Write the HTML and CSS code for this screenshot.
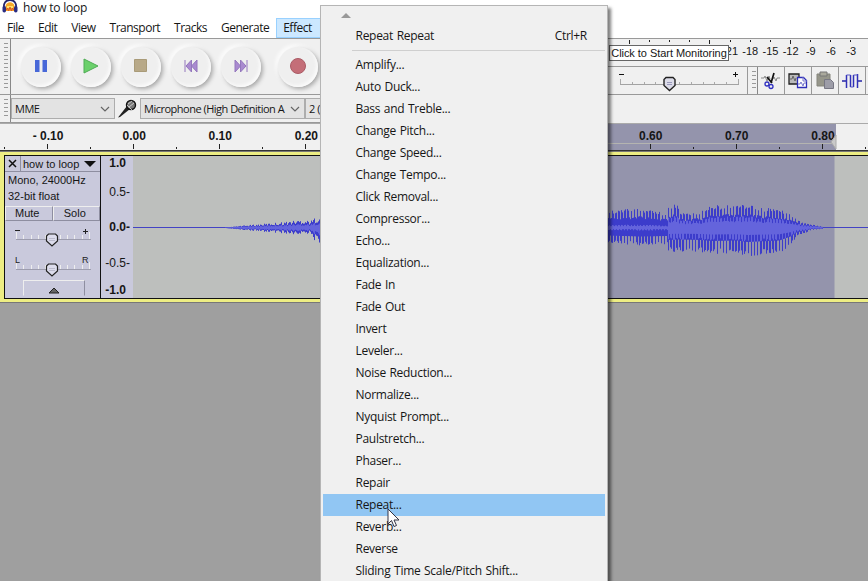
FILE: index.html
```html
<!DOCTYPE html>
<html lang="en">
<head>
  <meta charset="UTF-8" />
  <title>how to loop</title>
  <link rel="stylesheet" href="styles.css">
</head>
<body>

<div class="titlebar">
  <svg class="logo" width="16" height="14" viewBox="0 0 16 14">
    <path d="M2 9C1 3 4 0 8 0s7 3 6 9" fill="none" stroke="#23246b" stroke-width="1.800"/>
    <path d="M3.500 11V6c1-5 8-5 9 0v5z" fill="#f7a929"/>
    <path d="M5 6h6v2H5z" fill="#ffe36a"/>
    <rect x="0.500" y="6" width="3.500" height="6.500" rx="1.700" fill="#2b2d82"/>
    <rect x="12" y="6" width="3.500" height="6.500" rx="1.700" fill="#2b2d82"/>
    <path d="M4 10l1.500-2 1 3 1.500-4 1.500 4 1-3 1.500 2" fill="none" stroke="#d9542b"/>
  </svg>
  <span>how to loop</span>
</div>

<div class="menubar">
  <span>File</span><span>Edit</span><span>View</span><span>Transport</span><span>Tracks</span><span>Generate</span><span class="open">Effect</span>
</div>

<div class="toolbars">
  <div class="left">
    <div class="transport">
      <i class="grip"></i>
      <button><svg width="14" height="14"><path d="M1 1h4.500v12H1zM8.500 1H13v12H8.500z" fill="#4868d8"/></svg></button>
      <button><svg width="16" height="16"><path d="M1 1l14 7-14 7z" fill="#6bd06b" stroke="#4fac55"/></svg></button>
      <button><svg width="14" height="14"><path d="M.5.5h12v12H.5z" fill="#b8a988" stroke="#a99b78"/></svg></button>
      <button><svg width="14" height="14"><path d="M1 1v12M7.500 1L2 7l5.500 6zM13 1L7.500 7l5.500 6z" fill="#a98ad0" stroke="#9477bd"/></svg></button>
      <button><svg width="14" height="14"><path d="M13 1v12M1 1l5.500 6L1 13zM6.500 1L12 7l-5.500 6z" fill="#a98ad0" stroke="#9477bd"/></svg></button>
      <button class="record"><svg width="18" height="18"><circle cx="9" cy="9" r="7.500" fill="#c46e78" stroke="#ab5b65"/></svg></button>
    </div>
    <div class="devices">
      <i class="grip"></i>
      <div class="select host">MME<svg width="10" height="6"><path d="M1 1l4 4 4-4"/></svg></div>
      <svg class="mic" width="20" height="20" viewBox="0 0 20 20">
        <path d="M1 18.500L10 7l3 3L3 18z" fill="#222"/>
        <circle cx="14" cy="6" r="4.500" fill="#777" stroke="#111" stroke-width="1.400"/>
        <path d="M11 5l4-3M12 8l5-4M10 6l5 5" stroke="#ddd" stroke-width=".8"/>
      </svg>
      <div class="select input">Microphone (High Definition A<svg width="10" height="6"><path d="M1 1l4 4 4-4"/></svg></div>
      <div class="select channels">2 (Stereo)</div>
    </div>
  </div>
  <div class="right">
    <div class="meter">
      <svg width="260" height="6"><path id="meter-ticks" stroke="#222"/></svg>
      <div class="scale"><span>-21</span><span>-18</span><span>-15</span><span>-12</span><span>-9</span><span>-6</span><span>-3</span><span>0</span></div>
      <div class="tooltip">Click to Start Monitoring</div>
    </div>
    <div class="tools">
      <svg class="slider" width="139" height="26">
        <path d="M11 7.500h5M125 7.500h5M127.500 5v5" stroke="#111"/>
        <path id="volume-ticks" stroke="#aaa"/>
        <path d="M12 17.500h119" stroke="#a3a3a3"/>
        <path d="M58 10.500h7l2 2v6l-5.500 5-5.500-5v-6z" fill="#dcdce8" stroke="#222" stroke-width="1.400"/>
        <path d="M59 15.500h5M59 17.500h5" stroke="#99b"/>
      </svg>
      <i class="grip"></i>
      <button><svg width="20" height="18">
        <path d="M0 6h3l1-2 2 5 2-5 1 3M12 7l1-2 2 4 1-3h3" fill="none" stroke="#888"/>
        <path d="M13 1l-3 10M6 5l5 6" stroke="#111" stroke-width="1.700"/>
        <circle cx="6" cy="12" r="2" fill="none" stroke="#2f2fc0" stroke-width="1.300"/><circle cx="10" cy="14.500" r="2" fill="none" stroke="#2f2fc0" stroke-width="1.300"/>
      </svg></button>
      <button><svg width="20" height="18">
        <path d="M1 2h10v10H1z" fill="#bbb" stroke="#222" stroke-width="1.300"/><path d="M2 7h2l1-3 2 5 1-3" fill="none" stroke="#666"/>
        <path d="M9.500 5.500h6l3 3v7h-9z" fill="#fff" stroke="#2f2fb8" stroke-width="1.300"/><path d="M15 5v4h4M10 12h2l1-2 2 4 1-3h2" fill="none" stroke="#77c"/>
      </svg></button>
      <button><svg width="20" height="19">
        <path d="M2 3h13v12H2z" fill="#96968a" stroke="#85857c"/><path d="M5 1h7v4H5z" fill="#aaa99c" stroke="#777"/>
        <path d="M9.500 8.500h6l3 3v6h-9z" fill="#9d9da8" stroke="#777784"/>
      </svg></button>
      <button><svg width="20" height="18">
        <path d="M0 9h5M15 9h5" stroke="#2626a8" stroke-width="1.300"/><path d="M4.500 3v13M8.500 3v12M11.500 3v12M15.500 2v14" stroke="#3030b8" stroke-width="1.500"/><path d="M4.500 3h4M8.500 15h3M11.500 3h4" stroke="#5858c8"/>
      </svg></button>
    </div>
  </div>
</div>

<div class="ruler">
  <div class="labels"><span>- 0.10</span><span>0.00</span><span>0.10</span><span>0.20</span><span>0.30</span><span>0.40</span><span>0.50</span><span>0.60</span><span>0.70</span><span>0.80</span></div>
  <svg width="868" height="27">
    <path d="M400 19.500h432" stroke="#b4b4b0"/>
    <path id="ruler-ticks" stroke="#222"/>
    <path d="M836 11v14l-5-7z" fill="#c9c9c9" stroke="#aaa"/>
  </svg>
</div>

<div class="track">
  <div class="panel">
    <div class="name"><b><svg width="9" height="9"><path d="M1 1l7 7M8 1L1 8" stroke="#111" stroke-width="1.500"/></svg></b><span>how to loop</span><svg width="12" height="6"><path d="M0 0h12L6 6z" fill="#111"/></svg></div>
    <div class="info">Mono, 24000Hz<br>32-bit float</div>
    <div class="toggles"><span>Mute</span><span>Solo</span></div>
    <svg class="knobs" width="95" height="59">
      <path d="M10 9.500h5M78 10.500h5M80.500 8v5" stroke="#222"/>
      <path class="knob-ticks" stroke="#eee"/>
      <path d="M11 18.500h75M11 48.500h75" stroke="#9d9dae"/>
      <text x="10" y="42">L</text><text x="77" y="42">R</text>
      <g fill="#dcdcec" stroke="#222" stroke-width="1.200">
        <path d="M43.500 13h7l2 2v5l-5.500 5-5.500-5v-5z"/>
        <path d="M43.500 43h7l2 2v5l-5.500 5-5.500-5v-5z"/>
      </g>
      <path d="M44 17.500h6M44 19.500h6M44 47.500h6M44 49.500h6" stroke="#bbc"/>
    </svg>
    <div class="collapse"><svg width="12" height="7"><path d="M1 6l5-5 5 5z" fill="#666" stroke="#222"/></svg></div>
  </div>
  <div class="vscale"><b>1.0</b><span>0.5<i>-</i></span><b>0.0<i>-</i></b><span>-0.5<i>-</i></span><b>-1.0</b></div>
  <svg class="wave" width="737" height="142">
    <path d="M0 0h2v142H0z" fill="#c9c9dc"/>
    <rect x="269" width="434.500" height="142" fill="#9494ac"/>
    <path d="M2 71.500h735" stroke="#4343c4"/>
    <path id="peaks" stroke="#3c3ccb"/>
    <path id="rms" stroke="#6464dc"/>
  </svg>
</div>

<div class="effect-menu">
  <svg class="scroll-up" width="10" height="5"><path d="M0 5l5-5 5 5z" fill="#999"/></svg>
  <div class="item last-effect"><span>Repeat Repeat</span><span>Ctrl+R</span></div>
  <hr>
  <div class="item">Amplify...</div>
  <div class="item">Auto Duck...</div>
  <div class="item">Bass and Treble...</div>
  <div class="item">Change Pitch...</div>
  <div class="item">Change Speed...</div>
  <div class="item">Change Tempo...</div>
  <div class="item">Click Removal...</div>
  <div class="item">Compressor...</div>
  <div class="item">Echo...</div>
  <div class="item">Equalization...</div>
  <div class="item">Fade In</div>
  <div class="item">Fade Out</div>
  <div class="item">Invert</div>
  <div class="item">Leveler...</div>
  <div class="item">Noise Reduction...</div>
  <div class="item">Normalize...</div>
  <div class="item">Nyquist Prompt...</div>
  <div class="item">Paulstretch...</div>
  <div class="item">Phaser...</div>
  <div class="item">Repair</div>
  <div class="item hover">Repeat...</div>
  <div class="item">Reverb...</div>
  <div class="item">Reverse</div>
  <div class="item">Sliding Time Scale/Pitch Shift...</div>
</div>

<svg class="cursor" width="13" height="20"><path d="M1 1v15l3.500-3.500 2.500 6 2.500-1-2.500-5.500h5z" fill="#fff" stroke="#334"/></svg>

<script src="script.js"></script>
</body>
</html>
```

FILE: styles.css
```css
* {
  box-sizing: border-box;
}

body {
  margin: 0;
  width: 868px;
  height: 581px;
  overflow: hidden;
  background: #9f9f9f;
  font-family: "Open Sans", "Noto Sans", sans-serif;
  font-size: 12px;
  color: #161616;
}

svg {
  display: block;
  flex: none;
}

.titlebar {
  display: flex;
  gap: 5px;
  height: 18px;
  padding-left: 2px;
  background: #fff;
  line-height: 15px;
  letter-spacing: -0.2px;
}

.menubar {
  display: flex;
  height: 20px;
  background: #fff;
  line-height: 19px;
  letter-spacing: -0.5px;
}

.menubar span {
  padding: 0 7px;
}

.menubar .open {
  background: #cce8ff;
  border: 1px solid #99d1ff;
  line-height: 17px;
  padding: 0 6px;
  width: 50px;
}

.toolbars {
  display: flex;
  height: 85px;
  background: #f0f0f0;
  border-top: 1px solid #999;
}

.left {
  width: 608px;
}

.right {
  width: 260px;
}

.grip {
  flex: none;
  width: 11px;
  align-self: stretch;
  border-right: 1px solid #888;
  background: repeating-linear-gradient(#999 0 1px, transparent 1px 4px) 4px 4px / 4px calc(100% - 8px) no-repeat;
}

button {
  display: flex;
  align-items: center;
  justify-content: center;
  padding: 0;
  border: 0;
  background: #f0f0f0;
}

.transport {
  display: flex;
  align-items: center;
  gap: 10px;
  height: 56px;
  border-bottom: 1px solid #999;
}

.transport button {
  width: 40px;
  height: 40px;
  padding-bottom: 2px;
  border-radius: 50%;
  background: #efefef;
  box-shadow: 2px 2px 4px #a8a8a8, -2px -2px 4px #fff, inset -2px -2px 3px #fafafa;
}

.transport .record {
  margin-left: 7px;
}

.devices {
  display: flex;
  align-items: center;
  height: 28px;
  border-bottom: 1px solid #999;
}

.select {
  display: flex;
  align-items: center;
  justify-content: space-between;
  height: 21px;
  padding: 0 4px 0 3px;
  border: 1px solid #adadad;
  background: #e3e3e3;
  font-size: 11px;
  white-space: nowrap;
  letter-spacing: -0.5px;
}

.select path {
  fill: none;
  stroke: #666;
  stroke-width: 1.2;
}

.host {
  width: 104px;
}

.mic {
  margin: 0 3px 0 2px;
}

.input {
  width: 165px;
}

.channels {
  width: 80px;
}

.meter {
  position: relative;
  height: 28px;
  overflow: hidden;
  border-bottom: 1px solid #999;
}

.scale {
  display: flex;
  width: 148px;
  margin-left: 112px;
  font: 11px/13px "Liberation Sans", sans-serif;
}

.scale span {
  flex: none;
  width: 20.2px;
  text-align: center;
}

.tooltip {
  position: absolute;
  left: 1px;
  top: 6px;
  width: 120px;
  height: 16px;
  border: 1px solid #666;
  background: #fff;
  font: 11px/15px "Liberation Sans", sans-serif;
  letter-spacing: -0.05px;
  text-align: center;
  white-space: nowrap;
}

.tools {
  display: flex;
  height: 28px;
  border-bottom: 1px solid #999;
}

.tools .grip {
  border-left: 1px solid #999;
}

.tools button {
  flex: none;
  width: 27px;
  border-right: 1px solid #999;
}

.ruler {
  position: relative;
  height: 28px;
  border-top: 1px solid #aaa;
  border-bottom: 1px solid #333;
  background: linear-gradient(90deg, #f0f0f0 400px, #9494ac 400px 836px, #f0f0f0 836px);
}

.labels {
  display: flex;
  padding-left: 5px;
  font: bold 12px/25px "Liberation Sans", sans-serif;
}

.labels span {
  flex: none;
  width: 86.1px;
  text-align: center;
}

/* ticks lie over the labels */
.ruler svg {
  position: absolute;
  left: 0;
  top: 0;
}

.track {
  display: flex;
  height: 152px;
  padding: 3px 0 3px 4px;
  border: 1px solid #777;
  border-width: 1px 0;
  background: #eded83;
  font-family: "Liberation Sans", sans-serif;
}

.panel {
  width: 97px;
  border: 1px solid #111;
  background: #c9c9dc;
}

.name {
  display: flex;
  align-items: center;
  height: 16px;
  border-bottom: 1px solid #8e8ea0;
  font-size: 11px;
}

.name b {
  width: 16px;
  height: 15px;
  padding: 3px;
  border-right: 1px solid #8e8ea0;
}

.name span {
  width: 63px;
  padding-left: 2px;
  white-space: nowrap;
}

.info {
  height: 34px;
  padding: 0 3px;
  font-size: 11px;
  line-height: 16px;
}

.toggles {
  display: flex;
  height: 15px;
  font-size: 11px;
  text-align: center;
}

.toggles span {
  flex: 1;
  padding-right: 3px;
  border: 1px solid;
  border-color: #eee #8e8ea0 #8e8ea0 #eee;
  line-height: 13px;
}

.knobs text {
  font-size: 9px;
  fill: #222;
}

.collapse {
  display: flex;
  justify-content: center;
  width: 62px;
  height: 16px;
  margin-left: 18px;
  padding-top: 6px;
  border: 1px solid;
  border-color: #eee #8e8ea0 #c9c9dc #eee;
}

.vscale {
  display: grid;
  grid-template-rows: 29px 35px 36px 27px 14px;
  width: 30px;
  border: 1px solid #111;
  border-width: 1px 0;
  background: #c9c9dc;
  font-size: 12px;
  line-height: 14px;
}

.vscale > * {
  display: flex;
  justify-content: flex-end;
  padding-right: 5px;
}

.vscale i {
  margin-right: -4px;
  font-style: normal;
}

.wave {
  box-sizing: content-box;
  border: 1px solid #111;
  border-width: 1px 0;
  background: #bdbfbd;
}

.effect-menu {
  position: absolute;
  left: 320px;
  top: 5px;
  width: 288px;
  height: 590px;
  padding: 0 2px;
  border: 1px solid #b5b5b5;
  background: #f0f0f0;
  box-shadow: 3px 3px 3px rgba(0, 0, 0, 0.5);
  letter-spacing: -0.28px;
  word-spacing: 0.8px;
}

.scroll-up {
  margin: 7px 0 7px 18px;
}

.item {
  height: 22px;
  padding-left: 32.5px;
  line-height: 21px;
  white-space: nowrap;
}

.last-effect {
  display: flex;
  justify-content: space-between;
  padding-right: 18px;
  line-height: 22px;
}

.effect-menu hr {
  margin: 3px 0 3px 29px;
  border: 0;
  border-top: 1px solid #cfcfcf;
}

.hover {
  background: #91c6f3;
}

.cursor {
  position: absolute;
  left: 387px;
  top: 508px;
}
```

FILE: script.js
```js
// evenly spaced vertical ticks as path data
function ticks(start, step, count, from, to, bigEvery, bigFrom) {
  let d = '';
  for (let i = 0; i < count; i++) {
    const top = bigEvery && i % bigEvery === 0 ? bigFrom : from;
    d += `M${Math.round(start + i * step) + 0.5} ${top}V${to}`;
  }
  return d;
}

document.getElementById('meter-ticks').setAttribute('d', ticks(21, 20.1, 13, 1, 3) + ticks(21, 80.4, 4, 1, 5));
document.getElementById('volume-ticks').setAttribute('d', ticks(12, 11.8, 11, 15, 17, 10, 12));
document.getElementById('ruler-ticks').setAttribute('d', ticks(4, 43.05, 21, 23, 25) + ticks(47, 86.1, 10, 20, 25));
document.querySelector('.knob-ticks').setAttribute('d', ticks(11, 7.3, 11, 14, 18, 10, 11) + ticks(11, 7.3, 11, 44, 48, 10, 41));

// envelope points: x, height above zero, height below zero
const envelope = [
  [94, 0, 0], [112, 2, 2], [135, 4, 4], [155, 6, 6], [170, 8, 7], [180, 7, 6], [184, 11, 16], [189, 11, 21],
  [300, 16, 16], [477, 17, 15], [508, 19, 17], [536, 14, 16], [537, 21, 24], [546, 23, 23], [549, 14, 23],
  [570, 16, 24], [580, 22, 26], [605, 23, 25], [616, 22, 28], [648, 18, 25], [659, 13, 17], [666, 9, 8],
  [670, 5, 7], [680, 3, 2], [692, 1, 1]
];

let peaks = '';
let rms = '';
for (let k = 0; k < envelope.length - 1; k++) {
  const [x0, u0, d0] = envelope[k];
  const [x1, u1, d1] = envelope[k + 1];
  for (let x = x0; x < x1; x++) {
    const t = (x - x0) / (x1 - x0);
    // uneven pulses, about three pixels apart
    const noise = Math.abs(Math.sin(x * 12.9898) * 43758.5453) % 1;
    const spike = x < 200 ? 0.4 + 0.6 * noise : ((x * 10) % 31 < 16 ? 0.8 + 0.22 * noise : 0.45 + 0.15 * noise);
    const up = (u0 + (u1 - u0) * t) * spike;
    const down = (d0 + (d1 - d0) * t) * (x < 200 ? spike : ((x * 10 + 8) % 31 < 16 ? 0.8 + 0.22 * noise : 0.5));
    const body = x > 200 && x < 537 ? 0.15 : 0.5;
    peaks += `M${x + 0.5} ${(71.5 - up).toFixed(1)}V${(72 + down).toFixed(1)}`;
    rms += `M${x + 0.5} ${(71.5 - up * body).toFixed(1)}V${(72 + down * body).toFixed(1)}`;
  }
}
document.getElementById('peaks').setAttribute('d', peaks);
document.getElementById('rms').setAttribute('d', rms);
```
